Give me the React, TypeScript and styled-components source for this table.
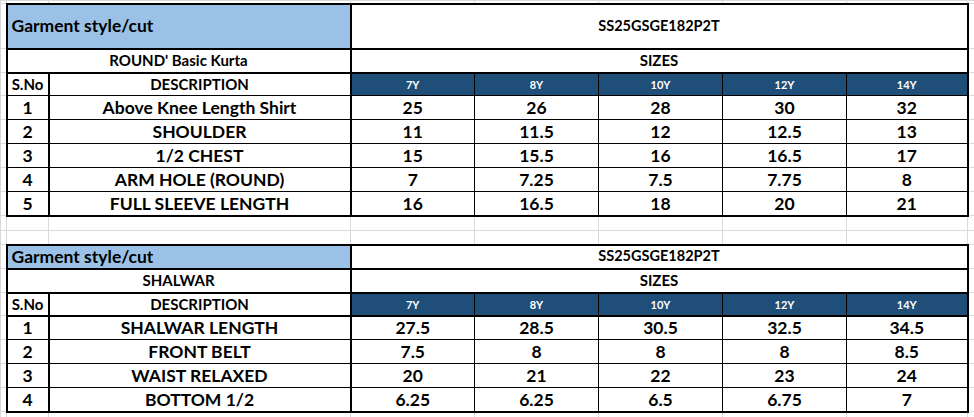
import styled, { createGlobalStyle } from "styled-components";

const GlobalStyle = createGlobalStyle`
  body {
    margin: 0;
    background: #fff;
    font-family: Lato, "Open Sans", sans-serif;
  }
`;

type Edge = 0 | 1 | 2;

const line = (w: Edge = 1) =>
  w === 2 ? "2px solid #000" : w === 0 ? "1px solid #dadada" : "1px solid #000";

interface EdgeProps {
  $t?: Edge;
  $r?: Edge;
  $b?: Edge;
  $l?: Edge;
}

interface Chart {
  code: string;
  name: string;
  thickHeaderRule: boolean;
  titleHeight: number;
  rows: { label: string; values: string[] }[];
}

const SIZES = ["7Y", "8Y", "10Y", "12Y", "14Y"];

const CHARTS: Chart[] = [
  {
    code: "SS25GSGE182P2T",
    name: "ROUND' Basic Kurta",
    thickHeaderRule: false,
    titleHeight: 45,
    rows: [
      { label: "Above Knee Length Shirt", values: ["25", "26", "28", "30", "32"] },
      { label: "SHOULDER", values: ["11", "11.5", "12", "12.5", "13"] },
      { label: "1/2 CHEST", values: ["15", "15.5", "16", "16.5", "17"] },
      { label: "ARM HOLE (ROUND)", values: ["7", "7.25", "7.5", "7.75", "8"] },
      { label: "FULL SLEEVE LENGTH", values: ["16", "16.5", "18", "20", "21"] },
    ],
  },
  {
    code: "SS25GSGE182P2T",
    name: "SHALWAR",
    thickHeaderRule: true,
    titleHeight: 24,
    rows: [
      { label: "SHALWAR LENGTH", values: ["27.5", "28.5", "30.5", "32.5", "34.5"] },
      { label: "FRONT BELT", values: ["7.5", "8", "8", "8", "8.5"] },
      { label: "WAIST RELAXED", values: ["20", "21", "22", "23", "24"] },
      { label: "BOTTOM 1/2", values: ["6.25", "6.25", "6.5", "6.75", "7"] },
    ],
  },
];

// column widths of the sheet grid, edge columns included
const COLS = [6, 42, 302, 124, 124, 124, 124, 121, 7];

const Sheet = styled.table`
  width: 974px;
  table-layout: fixed;
  border-collapse: collapse;
`;

const Row = styled.tr<{ $h: number }>`
  height: ${(p) => p.$h}px;
`;

const GridCell = styled.td`
  padding: 0;
  border: ${line(0)};
`;

const Cell = styled.td<EdgeProps>`
  padding: 0;
  border-top: ${(p) => line(p.$t)};
  border-right: ${(p) => line(p.$r)};
  border-bottom: ${(p) => line(p.$b)};
  border-left: ${(p) => line(p.$l)};
  color: #000;
  font-size: 17.5px;
  font-weight: 700;
  line-height: 1;
  text-align: center;
  vertical-align: middle;
  white-space: nowrap;
  overflow: hidden;
`;

const TitleCell = styled(Cell)`
  background: #9bc2e6;
  font-size: 17.5px;
  text-align: left;
  padding-left: 4px;
`;

const CodeCell = styled(Cell)`
  font-size: 14.5px;
`;

const SubCell = styled(Cell)`
  font-size: 15px;
`;

const SizeHead = styled(Cell)`
  background: #1f4e78;
  color: #fff;
  font-size: 11px;
`;

const Spacer = ({ h }: { h: number }) => (
  <Row $h={h}>
    {COLS.map((_, i) => (
      <GridCell key={i} />
    ))}
  </Row>
);

const SizeChart = ({ chart }: { chart: Chart }) => {
  const last = chart.rows.length - 1;
  const rule: Edge = chart.thickHeaderRule ? 2 : 1;
  return (
    <>
      <Row $h={chart.titleHeight}>
        <GridCell />
        <TitleCell colSpan={2} $t={2} $l={2} $b={2} $r={2}>
          Garment style/cut
        </TitleCell>
        <CodeCell colSpan={5} $t={2} $r={2} $b={2}>
          {chart.code}
        </CodeCell>
        <GridCell />
      </Row>
      <Row $h={24}>
        <GridCell />
        <SubCell colSpan={2} $l={2} $r={2} $b={2}>
          {chart.name}
        </SubCell>
        <SubCell colSpan={5} $r={2} $b={2}>
          SIZES
        </SubCell>
        <GridCell />
      </Row>
      <Row $h={23}>
        <GridCell />
        <SubCell $l={2} $r={2} $b={rule}>
          S.No
        </SubCell>
        <SubCell $r={2} $b={rule}>
          DESCRIPTION
        </SubCell>
        {SIZES.map((s, i) => (
          <SizeHead key={s} $r={i === SIZES.length - 1 ? 2 : 1} $b={rule}>
            {s}
          </SizeHead>
        ))}
        <GridCell />
      </Row>
      {chart.rows.map((row, i) => {
        const b: Edge = i === last ? 2 : 1;
        return (
          <Row $h={24} key={row.label}>
            <GridCell />
            <Cell $l={2} $r={2} $b={b}>
              {i + 1}
            </Cell>
            <Cell $r={2} $b={b}>
              {row.label}
            </Cell>
            {row.values.map((v, j) => (
              <Cell key={j} $r={j === row.values.length - 1 ? 2 : 1} $b={b}>
                {v}
              </Cell>
            ))}
            <GridCell />
          </Row>
        );
      })}
    </>
  );
};

export default function App() {
  return (
    <>
      <GlobalStyle />
      <Sheet>
        <colgroup>
          {COLS.map((w, i) => (
            <col key={i} style={{ width: w }} />
          ))}
        </colgroup>
        <tbody>
          <Spacer h={3} />
          <SizeChart chart={CHARTS[0]} />
          <Spacer h={15} />
          <Spacer h={14} />
          <SizeChart chart={CHARTS[1]} />
          <Spacer h={6} />
        </tbody>
      </Sheet>
    </>
  );
}
